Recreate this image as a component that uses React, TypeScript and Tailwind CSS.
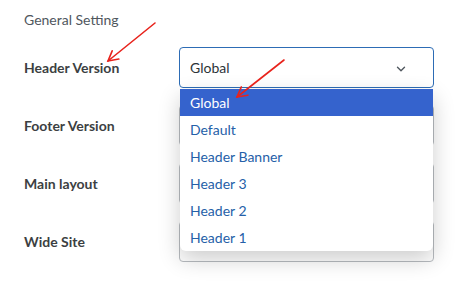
import { ChevronDown } from 'lucide-react'

const rows = ['Header Version', 'Footer Version', 'Main layout', 'Wide Site']
const options = ['Global', 'Default', 'Header Banner', 'Header 3', 'Header 2', 'Header 1']

function Arrow({ x1, y1, x2, y2 }: { x1: number; y1: number; x2: number; y2: number }) {
  const a = Math.atan2(y1 - y2, x1 - x2)
  const len = 11
  const h1 = [x2 + len * Math.cos(a + 0.5), y2 + len * Math.sin(a + 0.5)]
  const h2 = [x2 + len * Math.cos(a - 0.5), y2 + len * Math.sin(a - 0.5)]
  return (
    <g stroke="#e8231c" strokeWidth={1.6} fill="none" strokeLinecap="round">
      <line x1={x1} y1={y1} x2={x2} y2={y2} />
      <polyline points={`${h1[0]},${h1[1]} ${x2},${y2} ${h2[0]},${h2[1]}`} />
    </g>
  )
}

export default function App() {
  return (
    <div
      className="relative h-[281px] w-[476px] overflow-hidden bg-white px-6 pt-[10px] text-[14px]"
      style={{ fontFamily: 'Lato, "Noto Sans", sans-serif' }}
    >
      <h2 className="h-5 leading-5 text-[#50575e]">General Setting</h2>

      <div className="mt-[17px] flex flex-col gap-[17px]">
        {rows.map((label, i) => (
          <div key={label} className="flex h-[41px] items-center">
            <span className="w-[155px] font-bold text-[#3c3f42]">{label}</span>
            <div
              className={`relative flex h-[41px] w-[255px] items-center rounded border pl-[10px] ${
                i === 0 ? 'border-[#2d6cb5]' : 'border-[#b8bcc0]'
              }`}
            >
              {i === 0 && <span className="text-[#2c3338]">Global</span>}
              {i === 0 && (
                <ChevronDown
                  size={14}
                  strokeWidth={2.4}
                  className="absolute right-[25px] top-[14px] text-[#50575e]"
                />
              )}
              {i === 0 && (
                <ul className="absolute left-0 top-[41px] z-10 w-[253px] overflow-hidden rounded-b-md bg-white shadow-[0_8px_22px_rgba(0,0,0,0.2)]">
                  {options.map((o, j) => (
                    <li
                      key={o}
                      className={`flex h-[27px] items-center pl-[10px] ${
                        j === 0 ? 'bg-[#3563cd] text-white' : 'text-[#2560a8]'
                      }`}
                    >
                      {o}
                    </li>
                  ))}
                </ul>
              )}
            </div>
          </div>
        ))}
      </div>

      <svg className="pointer-events-none absolute left-0 top-0 z-20" width={476} height={281}>
        <Arrow x1={155} y1={23} x2={108} y2={61} />
        <Arrow x1={284} y1={60} x2={237} y2={97} />
      </svg>
    </div>
  )
}
